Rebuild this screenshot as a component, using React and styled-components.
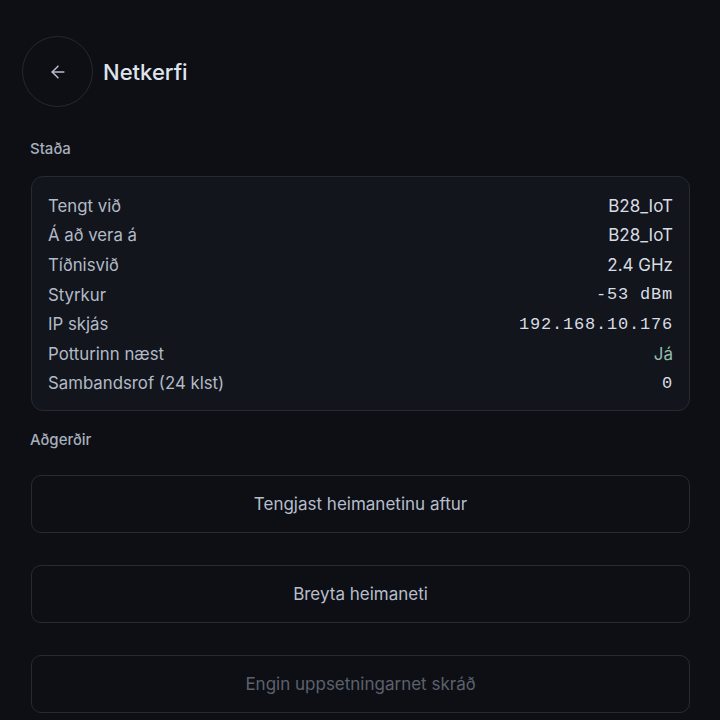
import styled, { createGlobalStyle } from 'styled-components';

const GlobalStyle = createGlobalStyle`
  html, body {
    margin: 0;
    padding: 0;
    background: #0d0f14;
  }
  body {
    font-family: Inter, 'Noto Sans', sans-serif;
    color: #dfe3ec;
  }
`;

const statusRows = [
  { label: 'Tengt við', value: 'B28_IoT' },
  { label: 'Á að vera á', value: 'B28_IoT' },
  { label: 'Tíðnisvið', value: '2.4 GHz' },
  { label: 'Styrkur', value: '-53 dBm', mono: true },
  { label: 'IP skjás', value: '192.168.10.176', mono: true },
  { label: 'Potturinn næst', value: 'Já', good: true },
  { label: 'Sambandsrof (24 klst)', value: '0', mono: true },
];

const actions = [
  { label: 'Tengjast heimanetinu aftur' },
  { label: 'Breyta heimaneti' },
  { label: 'Engin uppsetningarnet skráð', disabled: true },
];

export default function App() {
  return (
    <Page>
      <GlobalStyle />
      <Header>
        <BackButton aria-label="Til baka">
          <svg width="20" height="20" viewBox="0 0 24 24" fill="none" stroke="currentColor" strokeWidth="1.8" strokeLinecap="round" strokeLinejoin="round">
            <path d="M19 12H5" />
            <path d="M12 19l-7-7 7-7" />
          </svg>
        </BackButton>
        <Title>Netkerfi</Title>
      </Header>

      <SectionLabel>Staða</SectionLabel>
      <StatusCard>
        {statusRows.map((row) => (
          <StatusRow key={row.label}>
            <RowLabel>{row.label}</RowLabel>
            <RowValue $mono={row.mono} $good={row.good}>
              {row.value}
            </RowValue>
          </StatusRow>
        ))}
      </StatusCard>

      <SectionLabel>Aðgerðir</SectionLabel>
      <Actions>
        {actions.map((action) => (
          <ActionButton key={action.label} disabled={action.disabled}>
            {action.label}
          </ActionButton>
        ))}
      </Actions>
    </Page>
  );
}

const Page = styled.div`
  height: 720px;
  overflow: hidden;
  box-sizing: border-box;
  padding: 36px 30px 0 30px;
  display: flex;
  flex-direction: column;
`;

const Header = styled.div`
  display: flex;
  align-items: center;
  gap: 10px;
  margin-left: -8px;
  margin-bottom: 33px;
`;

const BackButton = styled.button`
  width: 71px;
  height: 71px;
  border-radius: 50%;
  border: 1px solid #242832;
  background: transparent;
  color: #b8bfcc;
  display: flex;
  align-items: center;
  justify-content: center;
  padding: 0;
  cursor: pointer;
`;

const Title = styled.h1`
  margin: 0;
  font-size: 22px;
  font-weight: 500;
  color: #dfe3ec;
`;

const SectionLabel = styled.h2`
  margin: 0 0 18px 0;
  font-size: 15px;
  font-weight: 500;
  color: #a8afbd;
  line-height: 18px;
`;

const StatusCard = styled.div`
  margin-left: 1px;
  border: 1px solid #262a33;
  border-radius: 12px;
  background: #12151b;
  padding: 14px 16px 12px 16px;
  margin-bottom: 20px;
  display: flex;
  flex-direction: column;
`;

const StatusRow = styled.div`
  display: flex;
  justify-content: space-between;
  align-items: center;
  height: 29.6px;
`;

const RowLabel = styled.span`
  font-size: 16.8px;
  color: #b3bac8;
`;

const RowValue = styled.span`
  font-family: ${({ $mono }) => ($mono ? "'Liberation Mono', monospace" : "Inter, 'Noto Sans', sans-serif")};
  font-size: 17px;
  letter-spacing: ${({ $mono }) => ($mono ? '0.8px' : '0')};
  color: ${({ $good }) => ($good ? '#93bdb0' : '#d8dce5')};
`;

const Actions = styled.div`
  display: flex;
  flex-direction: column;
  gap: 32px;
  margin-left: 1px;
  margin-top: 8px;
`;

const ActionButton = styled.button`
  height: 58px;
  border: 1px solid #262a33;
  border-radius: 10px;
  background: transparent;
  font-family: Inter, 'Noto Sans', sans-serif;
  font-size: 17px;
  color: ${({ disabled }) => (disabled ? '#5c616d' : '#b6bdcb')};
  cursor: ${({ disabled }) => (disabled ? 'default' : 'pointer')};
  flex-shrink: 0;
`;
